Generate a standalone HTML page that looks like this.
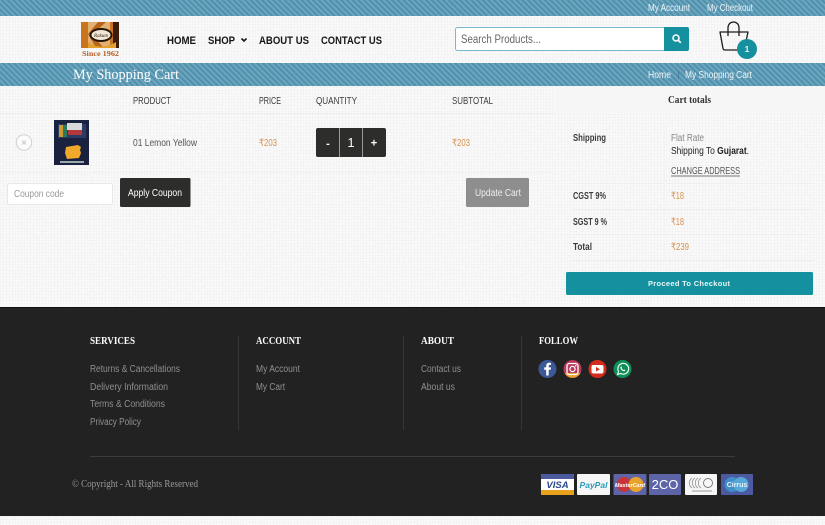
<!DOCTYPE html>
<html><head><meta charset="utf-8"><title>My Shopping Cart</title>
<style>
html,body{margin:0;padding:0;width:825px;height:525px;overflow:hidden;background:#fbfbfb}
svg{display:block}
text{font-family:"Liberation Sans","DejaVu Sans",sans-serif;white-space:pre}
.s{font-family:"Liberation Serif","DejaVu Serif",serif;font-weight:bold}
.n{font-size:11px;font-weight:bold;fill:#161616}
.h{font-size:9.800px;fill:#3c3c3c}
.t{font-size:10px;fill:#555}
.b{font-size:10px;fill:#3c3c3c;font-weight:bold}
.o{font-size:10px;fill:#d9924f}
.l{font-size:10px;fill:#8f8f8f}
.f{font-size:11px;fill:#fff}
.w{font-size:10px;fill:#eef4f7}
</style></head><body>
<svg width="825" height="525" viewBox="0 0 825 525" xmlns="http://www.w3.org/2000/svg">
<defs>
<pattern id="denim" width="4" height="4" patternUnits="userSpaceOnUse" patternTransform="rotate(45)">
<rect width="4" height="4" fill="#5b9ab5"/><rect width="4" height="1.300" fill="#72a9c1"/><rect y="2.400" width="4" height="1" fill="#4c8ca8"/>
</pattern>
<pattern id="linen" width="3" height="3" patternUnits="userSpaceOnUse">
<rect width="3" height="1" fill="#000" opacity=".014"/><rect width="1" height="3" fill="#000" opacity=".014"/>
</pattern>
<filter id="noise" x="0" y="0" width="100%" height="100%"><feTurbulence type="fractalNoise" baseFrequency="0.35 0.55" numOctaves="2" seed="4"/><feColorMatrix values="0 0 0 0 .6  0 0 0 0 .6  0 0 0 0 .6  .22 .22 0 0 -.14"/></filter>
</defs>
<rect width="825" height="525" fill="#fbfbfb"/>
<rect width="825" height="525" filter="url(#noise)" opacity=".5"/>
<rect width="825" height="525" fill="url(#linen)"/>
<rect y="0" width="825" height="16" fill="url(#denim)"/>
<rect y="63" width="825" height="23" fill="url(#denim)"/>
<rect y="86" x="555" width="270" height="27" fill="#f6f6f6"/>

<!-- top links -->
<text x="648" y="11" class="w" textLength="42" lengthAdjust="spacingAndGlyphs">My Account</text>
<text x="707" y="11" class="w" textLength="46" lengthAdjust="spacingAndGlyphs">My Checkout</text>

<!-- logo -->
<g>
<rect x="81" y="22" width="38" height="26" fill="#e2b072"/>
<path d="M81 22h7v26h-7z" fill="#c9741c"/>
<path d="M88 34l10-12h8L92 35l12 13h-8z" fill="#b9641a"/>
<path d="M110 22h3v26h-3z" fill="#c9721f"/>
<path d="M113 22h6v26h-6z" fill="#3a1c08"/>
<ellipse cx="101" cy="35" rx="11.500" ry="7" fill="#241508"/>
<ellipse cx="101" cy="35" rx="9.500" ry="5" fill="#f0e8d6"/>
<path d="M88 42c8 6 18 6 28 0v6H88z" fill="#e3a12c"/>
<text x="101" y="37" text-anchor="middle" style="font-size:5px;font-style:italic;font-family:'Liberation Serif',serif" fill="#3a2412">Rakum</text>
<text x="82" y="56" class="s" style="font-size:7px" fill="#b5602a" textLength="37" lengthAdjust="spacingAndGlyphs">Since 1962</text>
</g>

<!-- nav -->
<text x="167" y="44" class="n" textLength="29" lengthAdjust="spacingAndGlyphs">HOME</text>
<text x="208" y="44" class="n" textLength="27" lengthAdjust="spacingAndGlyphs">SHOP</text>
<path d="M241.500 38.500l2.500 2.500 2.500-2.500" fill="none" stroke="#161616" stroke-width="1.600"/>
<text x="259" y="44" class="n" textLength="50" lengthAdjust="spacingAndGlyphs">ABOUT US</text>
<text x="321" y="44" class="n" textLength="61" lengthAdjust="spacingAndGlyphs">CONTACT US</text>

<!-- search -->
<rect x="455.500" y="27.500" width="233" height="23" rx="2" fill="#fff" stroke="#79b8cd"/>
<path d="M664 27h23a2 2 0 0 1 2 2v20a2 2 0 0 1-2 2h-23z" fill="#14909f"/>
<circle cx="676" cy="38" r="3" fill="none" stroke="#fff" stroke-width="1.600"/>
<path d="M678.200 40.200l2.600 2.600" stroke="#fff" stroke-width="1.800"/>
<text x="461" y="43" style="font-size:11.500px" fill="#666" textLength="80" lengthAdjust="spacingAndGlyphs">Search Products...</text>

<!-- bag -->
<path d="M720 32h28l-3.500 16.500a2 2 0 0 1-2 1.500h-17.500a2 2 0 0 1-2-1.500z" fill="none" stroke="#1c1c1c" stroke-width="1.300" stroke-linejoin="round"/>
<path d="M728 36v-8c0-8 11-8 11 0v8" fill="none" stroke="#1c1c1c" stroke-width="1.300"/>
<circle cx="747" cy="49" r="10" fill="#14909f"/>
<text x="747" y="52" text-anchor="middle" style="font-size:8.500px;font-weight:bold" fill="#e8f4f6">1</text>

<!-- page title -->
<text x="73" y="79" class="s" style="font-size:14.500px;font-weight:normal" fill="#fff" textLength="106" lengthAdjust="spacingAndGlyphs">My Shopping Cart</text>
<text x="648" y="78" class="w" textLength="23" lengthAdjust="spacingAndGlyphs">Home</text>
<rect x="678" y="71" width="1" height="8" fill="#4a8097"/>
<text x="685" y="78" class="w" textLength="67" lengthAdjust="spacingAndGlyphs">My Shopping Cart</text>

<!-- table head -->
<text x="133" y="104" class="h" textLength="38" lengthAdjust="spacingAndGlyphs">PRODUCT</text>
<text x="259" y="104" class="h" textLength="22" lengthAdjust="spacingAndGlyphs">PRICE</text>
<text x="316" y="104" class="h" textLength="41" lengthAdjust="spacingAndGlyphs">QUANTITY</text>
<text x="452" y="104" class="h" textLength="41" lengthAdjust="spacingAndGlyphs">SUBTOTAL</text>
<text x="668" y="103" class="s" style="font-size:10px" fill="#333" textLength="43" lengthAdjust="spacingAndGlyphs">Cart totals</text>
<rect x="0" y="113" width="555" height="1" fill="#efefef"/>
<rect x="0" y="172" width="555" height="1" fill="#f2f2f2"/>

<!-- row -->
<circle cx="24" cy="142.500" r="7.700" fill="#fbfbfb" stroke="#cfcfcf"/>
<path d="M22 140.500l4 4M26 140.500l-4 4" stroke="#bbb" stroke-width=".8"/>
<rect x="54" y="120" width="35" height="45" fill="#1a2240"/>
<rect x="58" y="124" width="28" height="14" fill="#2a3c66"/>
<rect x="59" y="125" width="4" height="12" fill="#c93"/>
<rect x="63" y="125" width="4" height="12" fill="#2a7a60"/>
<rect x="67" y="123" width="15" height="7" fill="#d9d9d9"/>
<rect x="68" y="130" width="14" height="5" fill="#b33a3a"/>
<path d="M66 147l12-2 3 2-1 3 1 3-2 5-12 1-2-6z" fill="#f0a92a"/>
<rect x="60" y="161" width="24" height="2" fill="#9aa"/>
<text x="133" y="146" class="t" textLength="64" lengthAdjust="spacingAndGlyphs">01 Lemon Yellow</text>
<text x="259" y="146" class="o" textLength="18" lengthAdjust="spacingAndGlyphs">₹203</text>
<rect x="316" y="128" width="70" height="29" rx="2" fill="#2d2e2c"/>
<rect x="339" y="128" width="1" height="29" fill="#9a9a9a"/>
<rect x="362" y="128" width="1" height="29" fill="#9a9a9a"/>
<text x="328" y="147" text-anchor="middle" style="font-size:11px;font-weight:bold" fill="#fff">-</text>
<text x="351" y="147" text-anchor="middle" style="font-size:13px" fill="#fff">1</text>
<text x="374" y="146.500" text-anchor="middle" style="font-size:11px;font-weight:bold" fill="#fff">+</text>
<text x="452" y="146" class="o" textLength="18" lengthAdjust="spacingAndGlyphs">₹203</text>

<!-- coupon -->
<rect x="7.500" y="183.500" width="105" height="21" rx="2" fill="#fff" stroke="#e8e8e8"/>
<text x="14" y="197" style="font-size:10px" fill="#999" textLength="50" lengthAdjust="spacingAndGlyphs">Coupon code</text>
<rect x="120" y="178" width="70.500" height="29" rx="1.500" fill="#2d2e2c"/>
<text x="128" y="196" style="font-size:10px" fill="#fff" textLength="54" lengthAdjust="spacingAndGlyphs">Apply Coupon</text>
<rect x="466" y="178" width="63" height="29" rx="1.500" fill="#8e8e8e"/>
<text x="475" y="196" style="font-size:10px" fill="#eee" textLength="46" lengthAdjust="spacingAndGlyphs">Update Cart</text>

<!-- totals -->
<text x="573" y="141" class="b" textLength="33" lengthAdjust="spacingAndGlyphs">Shipping</text>
<text x="671" y="141" style="font-size:10px" fill="#888" textLength="33" lengthAdjust="spacingAndGlyphs">Flat Rate</text>
<text x="671" y="154" style="font-size:10px" fill="#222" textLength="78" lengthAdjust="spacingAndGlyphs">Shipping To <tspan font-weight="bold">Gujarat</tspan>.</text>
<text x="671" y="174" style="font-size:9.800px" fill="#555" textLength="69" lengthAdjust="spacingAndGlyphs">CHANGE ADDRESS</text>
<rect x="671" y="175.500" width="69" height="1" fill="#777"/>
<rect x="572" y="183" width="241" height="1" fill="#efefef"/>
<text x="573" y="199" class="b" textLength="33" lengthAdjust="spacingAndGlyphs">CGST 9%</text>
<text x="671" y="199" class="o" textLength="13" lengthAdjust="spacingAndGlyphs">₹18</text>
<rect x="572" y="209" width="241" height="1" fill="#efefef"/>
<text x="573" y="225" class="b" textLength="34" lengthAdjust="spacingAndGlyphs">SGST 9 %</text>
<text x="671" y="225" class="o" textLength="13" lengthAdjust="spacingAndGlyphs">₹18</text>
<rect x="572" y="234" width="241" height="1" fill="#efefef"/>
<text x="573" y="250" class="b" textLength="19" lengthAdjust="spacingAndGlyphs">Total</text>
<text x="671" y="250" class="o" textLength="18" lengthAdjust="spacingAndGlyphs">₹239</text>
<rect x="572" y="260" width="241" height="1" fill="#efefef"/>
<rect x="664" y="125" width="1" height="135" fill="#f3f3f3"/>
<rect x="566" y="272" width="247" height="23" rx="1.500" fill="#14909f"/>
<text x="648" y="286" style="font-size:7.500px;font-weight:bold" fill="#e8f5f7" textLength="82" lengthAdjust="spacing">Proceed To Checkout</text>

<!-- footer -->
<rect y="307" width="825" height="209" fill="#222"/>
<rect y="307" width="825" height="1" fill="#111"/>
<text x="90" y="344" class="s f" textLength="45" lengthAdjust="spacingAndGlyphs">SERVICES</text>
<text x="256" y="344" class="s f" textLength="45" lengthAdjust="spacingAndGlyphs">ACCOUNT</text>
<text x="421" y="344" class="s f" textLength="33" lengthAdjust="spacingAndGlyphs">ABOUT</text>
<text x="539" y="344" class="s f" textLength="39" lengthAdjust="spacingAndGlyphs">FOLLOW</text>
<text x="90" y="372" class="l" textLength="90" lengthAdjust="spacingAndGlyphs">Returns &amp; Cancellations</text>
<text x="90" y="390" class="l" textLength="78" lengthAdjust="spacingAndGlyphs">Delivery Information</text>
<text x="90" y="407" class="l" textLength="75" lengthAdjust="spacingAndGlyphs">Terms &amp; Conditions</text>
<text x="90" y="425" class="l" textLength="51" lengthAdjust="spacingAndGlyphs">Privacy Policy</text>
<text x="256" y="372" class="l" textLength="44" lengthAdjust="spacingAndGlyphs">My Account</text>
<text x="256" y="390" class="l" textLength="29" lengthAdjust="spacingAndGlyphs">My Cart</text>
<text x="421" y="372" class="l" textLength="40" lengthAdjust="spacingAndGlyphs">Contact us</text>
<text x="421" y="390" class="l" textLength="34" lengthAdjust="spacingAndGlyphs">About us</text>
<rect x="238" y="336" width="1" height="94" fill="#363636"/>
<rect x="403" y="336" width="1" height="94" fill="#363636"/>
<rect x="521" y="336" width="1" height="94" fill="#363636"/>
<rect x="90" y="456" width="645" height="1" fill="#3c3c3c"/>
<text x="72" y="487" style="font-size:10px;font-family:'Liberation Serif',serif" fill="#9a9a9a" textLength="126" lengthAdjust="spacingAndGlyphs">© Copyright - All Rights Reserved</text>

<!-- social -->
<circle cx="547.500" cy="369" r="9" fill="#3b5998"/>
<path d="M548.700 375.500v-5.800h2l.3-2.300h-2.300v-1.400c0-.7.200-1.100 1.100-1.100h1.200v-2a13 13 0 0 0-1.800-.1c-1.800 0-3 1.100-3 3v1.600h-2v2.300h2v5.800z" fill="#fff"/>
<circle cx="572.500" cy="369" r="9" fill="#b8385a"/>
<path d="M564.500 373a9 9 0 0 0 16 0z" fill="#e8a030"/>
<rect x="567" y="363.500" width="11" height="11" rx="2.500" fill="none" stroke="#fff" stroke-width="1.300"/>
<circle cx="572.500" cy="369" r="2.600" fill="none" stroke="#fff" stroke-width="1.200"/>
<circle cx="575.700" cy="365.800" r=".8" fill="#fff"/>
<circle cx="597.500" cy="369" r="9" fill="#d52b1e"/>
<rect x="591.500" y="365" width="12" height="8.500" rx="2" fill="#fff"/>
<path d="M596 367l4 2.200-4 2.200z" fill="#d52b1e"/>
<circle cx="622.500" cy="369" r="9" fill="#0d9058"/>
<path d="M617.500 374.500l1-3.200a5.400 5.400 0 1 1 2.200 2.200z" fill="none" stroke="#fff" stroke-width="1.100"/>
<path d="M620.700 366.800c.5-.5 1-.3 1.200.5.100.5-.3.700-.2 1 .4.800 1 1.300 1.800 1.700.3 0 .5-.5.900-.4.800.3 1.100.7.600 1.300-1.700 1.500-6-2.400-4.300-4.100z" fill="#fff"/>

<!-- cards -->
<g>
<rect x="541" y="474" width="33" height="21" rx="1" fill="#fff"/>
<path d="M541 475a1 1 0 0 1 1-1h31a1 1 0 0 1 1 1v4h-33z" fill="#4a5a9c"/>
<path d="M541 490h33v4a1 1 0 0 1-1 1h-31a1 1 0 0 1-1-1z" fill="#e9a21b"/>
<text x="557.500" y="488" text-anchor="middle" style="font-size:9.500px;font-weight:bold;font-style:italic" fill="#2a4a8c">VISA</text>
<rect x="577" y="474" width="33" height="21" rx="1" fill="#f6f6f6"/>
<text x="593.500" y="488" text-anchor="middle" style="font-size:8.500px;font-weight:bold;font-style:italic" fill="#2a9ab8">PayPal</text>
<rect x="613.500" y="474" width="33" height="21" rx="1" fill="#5d64a8"/>
<circle cx="624" cy="484.500" r="7.500" fill="#c8343c"/>
<circle cx="636" cy="484.500" r="7.500" fill="#e9a32b"/>
<text x="630" y="487" text-anchor="middle" style="font-size:5.500px;font-weight:bold;font-style:italic" fill="#fff">MasterCard</text>
<rect x="649" y="474" width="32" height="21" rx="1" fill="#5d64a8"/>
<text x="665" y="489" text-anchor="middle" style="font-size:13px" fill="#fff">2CO</text>
<rect x="685" y="474" width="32" height="21" rx="1" fill="#f6f6f6"/>
<g fill="none" stroke="#9a9a9a" stroke-width=".9"><path d="M692 478a6 6 0 0 0 0 10M695 478a6 6 0 0 0 0 10M698 478a6 6 0 0 0 0 10M701 478a6 6 0 0 0 0 10"/><circle cx="708" cy="483" r="4.500" stroke="#777"/></g>
<rect x="692" y="490.500" width="20" height="1" fill="#999"/>
<rect x="721" y="474" width="32" height="21" rx="1" fill="#4c5aa2"/>
<circle cx="732" cy="484.500" r="7.500" fill="#3f8fc9"/>
<circle cx="741" cy="484.500" r="7.500" fill="#55a8d8"/>
<text x="737" y="487" text-anchor="middle" style="font-size:7px;font-weight:bold" fill="#e8f2fa">Cirrus</text>
</g>
</svg>
</body></html>
